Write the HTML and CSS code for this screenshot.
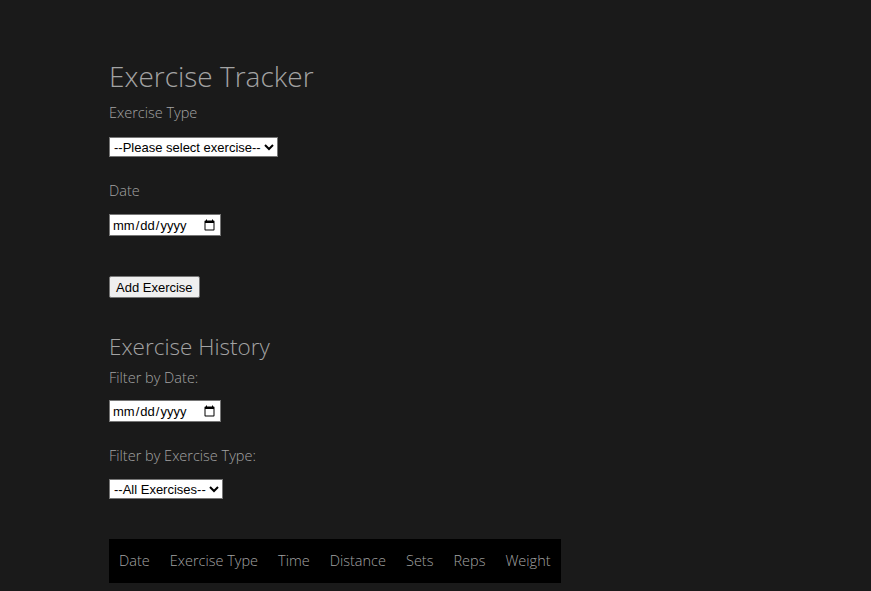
FILE: index.html
```html
<!DOCTYPE html>
<html>
<head>
<meta charset="utf-8">
<link rel="stylesheet" href="styles.css">
</head>
<body>
<main class="app">
  <h1 class="title">Exercise Tracker</h1>
  <form class="form">
    <label class="label">Exercise Type</label>
    <select class="field select">
      <option>--Please select exercise--</option>
    </select>
    <label class="label label-date">Date</label>
    <input class="field date" type="date">
    <button class="btn" type="button">Add Exercise</button>
  </form>
  <h2 class="subtitle">Exercise History</h2>
  <div class="filters">
    <label class="label">Filter by Date:</label>
    <input class="field date" type="date">
    <label class="label label-type">Filter by Exercise Type:</label>
    <select class="field select">
      <option>--All Exercises--</option>
    </select>
  </div>
  <table class="history">
    <thead>
      <tr>
        <th>Date</th>
        <th>Exercise Type</th>
        <th>Time</th>
        <th>Distance</th>
        <th>Sets</th>
        <th>Reps</th>
        <th>Weight</th>
      </tr>
    </thead>
  </table>
</main>
</body>
</html>
```
FILE: styles.css
```css
html, body {
  margin: 0;
  background: #1a1a1a;
}
body {
  font-family: "Open Sans", sans-serif;
  font-weight: 300;
  color: #a3a3a3;
}
.app {
  padding: 56px 0 0 109px;
}
.title {
  font-size: 28px;
  font-weight: 300;
  margin: 0 0 7px;
  line-height: 40px;
}
.form, .filters {
  display: flex;
  flex-direction: column;
  align-items: flex-start;
}
.label {
  font-size: 14.5px;
  line-height: 20px;
  display: block;
}
.field {
  font-family: Arial, "Liberation Sans", sans-serif;
  font-size: 13px;
  margin: 0;
}
.select {
  margin-top: 14px;
  height: 20px;
  padding: 0;
  border: 1px solid #767676;
  border-radius: 0;
  background: #fff;
  color: #000;
}
.label-date {
  margin-top: 24px;
}
.date {
  margin-top: 13px;
  height: 22px;
  width: 112px;
  box-sizing: border-box;
  padding: 1px 2px;
  border: 1px solid #767676;
  background: #fff;
  color: #000;
}
.btn {
  margin-top: 40px;
  font-family: Arial, "Liberation Sans", sans-serif;
  font-size: 13px;
  height: 22px;
  padding: 1px 6px;
  background: #efefef;
  border: 1px solid #767676;
  border-radius: 2px;
  color: #000;
}
.subtitle {
  font-size: 22.5px;
  font-weight: 300;
  margin: 33px 0 5px;
  line-height: 32px;
}
.filters .date {
  margin-top: 12px;
}
.label-type {
  margin-top: 24px;
}
.filters .select {
  margin-top: 13px;
}
.history {
  margin-top: 40px;
  background: #000;
  border-collapse: collapse;
}
.history th {
  font-weight: 300;
  font-size: 14.5px;
  padding: 12px 10px;
  line-height: 20px;
  color: #a3a3a3;
  text-align: left;
}
```
